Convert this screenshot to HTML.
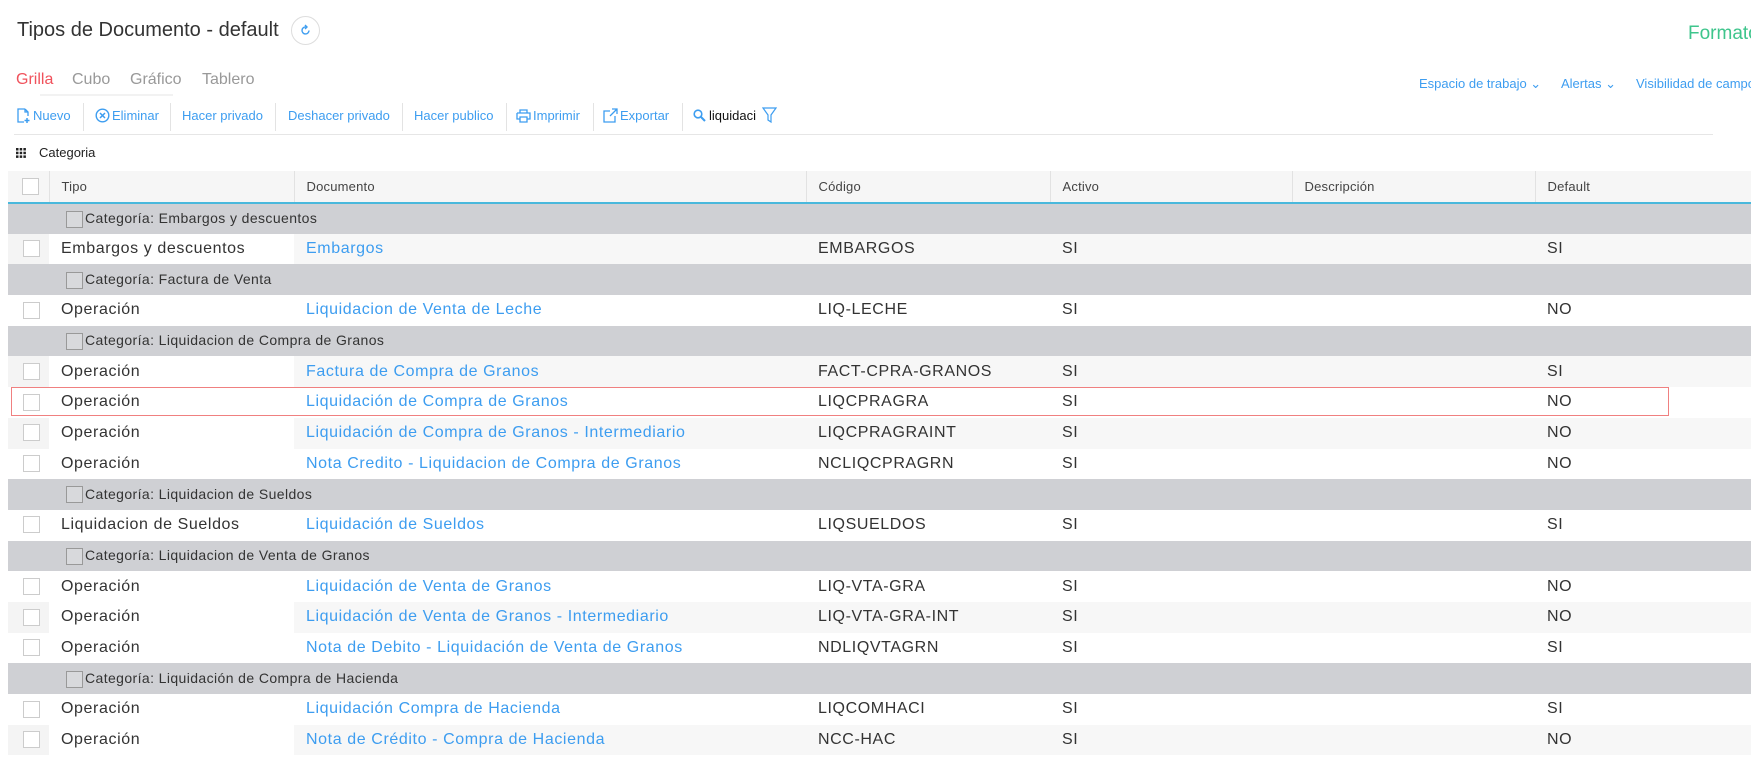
<!DOCTYPE html>
<html><head><meta charset="utf-8">
<style>
*{box-sizing:border-box;margin:0;padding:0}
body{width:1751px;height:761px;overflow:hidden;background:#fff;font-family:"Liberation Sans",Arial,sans-serif;position:relative;color:#333}
.a{position:absolute;white-space:nowrap}
.blue{color:#3d9df0}
.tb{position:absolute;top:107px;font-size:13px;color:#3d9df0;line-height:18px}
.sep{position:absolute;top:103px;width:1px;height:28px;background:#e3e3e3}
table{position:absolute;left:8px;top:171px;width:1743px;border-collapse:collapse;table-layout:fixed;font-size:16px;letter-spacing:0.6px}
td,th{height:30.7px;padding:0;white-space:nowrap;overflow:hidden;text-align:left;font-weight:normal}
th{height:32px;background:#f6f6f6;font-size:13px;letter-spacing:0.2px;color:#444;border-bottom:2px solid #49b8dc;border-left:1px solid #e2e2e2}
th:first-child{border-left:none}
th .t,td .t{padding-left:12px}
.cb{display:inline-block;width:17px;height:17px;border:1px solid #ccc;background:#fff;vertical-align:middle;margin-left:15px}
.g td{background:#cfd0d4;font-size:14px;letter-spacing:0.4px;color:#333}
.g .t{padding-left:17px!important}
.g .cb{margin-left:0;margin-right:2px;border-color:#999;background:#d8d9dc}
.s td{background:#f7f7f7}
.s td.w{background:#fff}
.s td:first-child{background:#f4f4f4}
td.l{color:#3d9df0}
</style></head><body>
<div class="a" style="left:17px;top:19px;font-size:20px;color:#333">Tipos de Documento - default</div>
<div class="a" style="left:291px;top:16px;width:29px;height:29px;border:1px solid #ddd;border-radius:50%;"></div>
<svg class="a" style="left:299px;top:24px" width="13" height="13" viewBox="0 0 13 13"><path d="M10 6.5A3.5 3.5 0 1 1 7 3" fill="none" stroke="#3d9df0" stroke-width="1.4"/><path d="M6 1l2 2-2 2" fill="none" stroke="#3d9df0" stroke-width="1.4"/></svg>
<div class="a" style="left:1688px;top:23px;font-size:19px;color:#3ec58c">Formato</div>

<div class="a" style="left:16px;top:71px;font-size:16px;color:#f0525c">Grilla</div>
<div class="a" style="left:72px;top:71px;font-size:16px;color:#999">Cubo</div>
<div class="a" style="left:130px;top:71px;font-size:16px;color:#999">Gráfico</div>
<div class="a" style="left:202px;top:71px;font-size:16px;color:#999">Tablero</div>
<div class="a" style="left:40px;top:94px;width:133px;height:2px;background:#f2f2f2"></div>

<div class="a blue" style="left:1419px;top:76px;font-size:13px">Espacio de trabajo &#8964;</div>
<div class="a blue" style="left:1561px;top:76px;font-size:13px">Alertas &#8964;</div>
<div class="a blue" style="left:1636px;top:76px;font-size:13px">Visibilidad de campos</div>

<svg class="a" style="left:16px;top:108px" width="15" height="16" viewBox="0 0 15 16"><path d="M9 1H2v13h6M9 1l3 3v4M9 1v3h3" fill="none" stroke="#3d9df0" stroke-width="1.3"/><path d="M11 10v5M8.5 12.5h5" stroke="#3d9df0" stroke-width="1.5"/></svg>
<div class="tb" style="left:33px">Nuevo</div>
<div class="sep" style="left:83px"></div>
<svg class="a" style="left:95px;top:108px" width="15" height="15" viewBox="0 0 15 15"><circle cx="7.5" cy="7.5" r="6.3" fill="none" stroke="#3d9df0" stroke-width="1.4"/><path d="M5 5l5 5M10 5l-5 5" stroke="#3d9df0" stroke-width="1.5"/></svg>
<div class="tb" style="left:112px">Eliminar</div>
<div class="sep" style="left:170px"></div>
<div class="tb" style="left:182px">Hacer privado</div>
<div class="sep" style="left:275px"></div>
<div class="tb" style="left:288px">Deshacer privado</div>
<div class="sep" style="left:402px"></div>
<div class="tb" style="left:414px">Hacer publico</div>
<div class="sep" style="left:506px"></div>
<svg class="a" style="left:516px;top:109px" width="15" height="14" viewBox="0 0 15 14"><path d="M4 4V1h7v3M1 4h13v6h-3M4 10H1V4M4 8h7v5H4z" fill="none" stroke="#3d9df0" stroke-width="1.3"/></svg>
<div class="tb" style="left:533px">Imprimir</div>
<div class="sep" style="left:593px"></div>
<svg class="a" style="left:603px;top:108px" width="15" height="15" viewBox="0 0 15 15"><path d="M7 3H1v11h11V8M9 1h5v5M14 1L7 8" fill="none" stroke="#3d9df0" stroke-width="1.3"/></svg>
<div class="tb" style="left:620px">Exportar</div>
<div class="sep" style="left:682px"></div>
<svg class="a" style="left:693px;top:109px" width="13" height="13" viewBox="0 0 13 13"><circle cx="5" cy="5" r="3.8" fill="none" stroke="#3d9df0" stroke-width="1.6"/><path d="M8 8l4 4" stroke="#3d9df0" stroke-width="2"/></svg>
<div class="tb" style="left:709px;color:#111;width:47px;overflow:hidden">liquidaci</div>
<svg class="a" style="left:762px;top:107px" width="15" height="17" viewBox="0 0 15 17"><path d="M1 1h13L9 8v7l-3-2V8z" fill="none" stroke="#3d9df0" stroke-width="1.2"/></svg>
<div class="a" style="left:14px;top:134px;width:1699px;height:1px;background:#e6e6e6"></div>

<svg class="a" style="left:16px;top:148px" width="10" height="10" viewBox="0 0 10 10" fill="#222"><rect x="0" y="0" width="2.5" height="2.5"/><rect x="3.7" y="0" width="2.5" height="2.5"/><rect x="7.4" y="0" width="2.5" height="2.5"/><rect x="0" y="3.7" width="2.5" height="2.5"/><rect x="3.7" y="3.7" width="2.5" height="2.5"/><rect x="7.4" y="3.7" width="2.5" height="2.5"/><rect x="0" y="7.4" width="2.5" height="2.5"/><rect x="3.7" y="7.4" width="2.5" height="2.5"/><rect x="7.4" y="7.4" width="2.5" height="2.5"/></svg>
<div class="a" style="left:39px;top:145px;font-size:13px;color:#222">Categoria</div>

<table>
<colgroup><col style="width:41px"><col style="width:245px"><col style="width:512px"><col style="width:244px"><col style="width:242px"><col style="width:243px"><col></colgroup>
<tr><th><span class="cb" style="margin-left:14px"></span></th><th><span class="t">Tipo</span></th><th><span class="t">Documento</span></th><th><span class="t">Código</span></th><th><span class="t">Activo</span></th><th><span class="t">Descripción</span></th><th><span class="t">Default</span></th></tr>
<tr class="g"><td></td><td colspan="6"><span class="t"><span class="cb"></span>Categoría: Embargos y descuentos</span></td></tr>
<tr class="s"><td><span class="cb"></span></td><td class="w"><span class="t">Embargos y descuentos</span></td><td class="l"><span class="t">Embargos</span></td><td><span class="t">EMBARGOS</span></td><td><span class="t">SI</span></td><td></td><td><span class="t">SI</span></td></tr>
<tr class="g"><td></td><td colspan="6"><span class="t"><span class="cb"></span>Categoría: Factura de Venta</span></td></tr>
<tr><td><span class="cb"></span></td><td><span class="t">Operación</span></td><td class="l"><span class="t">Liquidacion de Venta de Leche</span></td><td><span class="t">LIQ-LECHE</span></td><td><span class="t">SI</span></td><td></td><td><span class="t">NO</span></td></tr>
<tr class="g"><td></td><td colspan="6"><span class="t"><span class="cb"></span>Categoría: Liquidacion de Compra de Granos</span></td></tr>
<tr class="s"><td><span class="cb"></span></td><td class="w"><span class="t">Operación</span></td><td class="l"><span class="t">Factura de Compra de Granos</span></td><td><span class="t">FACT-CPRA-GRANOS</span></td><td><span class="t">SI</span></td><td></td><td><span class="t">SI</span></td></tr>
<tr><td><span class="cb"></span></td><td><span class="t">Operación</span></td><td class="l"><span class="t">Liquidación de Compra de Granos</span></td><td><span class="t">LIQCPRAGRA</span></td><td><span class="t">SI</span></td><td></td><td><span class="t">NO</span></td></tr>
<tr class="s"><td><span class="cb"></span></td><td class="w"><span class="t">Operación</span></td><td class="l"><span class="t">Liquidación de Compra de Granos - Intermediario</span></td><td><span class="t">LIQCPRAGRAINT</span></td><td><span class="t">SI</span></td><td></td><td><span class="t">NO</span></td></tr>
<tr><td><span class="cb"></span></td><td><span class="t">Operación</span></td><td class="l"><span class="t">Nota Credito - Liquidacion de Compra de Granos</span></td><td><span class="t">NCLIQCPRAGRN</span></td><td><span class="t">SI</span></td><td></td><td><span class="t">NO</span></td></tr>
<tr class="g"><td></td><td colspan="6"><span class="t"><span class="cb"></span>Categoría: Liquidacion de Sueldos</span></td></tr>
<tr><td><span class="cb"></span></td><td><span class="t">Liquidacion de Sueldos</span></td><td class="l"><span class="t">Liquidación de Sueldos</span></td><td><span class="t">LIQSUELDOS</span></td><td><span class="t">SI</span></td><td></td><td><span class="t">SI</span></td></tr>
<tr class="g"><td></td><td colspan="6"><span class="t"><span class="cb"></span>Categoría: Liquidacion de Venta de Granos</span></td></tr>
<tr><td><span class="cb"></span></td><td><span class="t">Operación</span></td><td class="l"><span class="t">Liquidación de Venta de Granos</span></td><td><span class="t">LIQ-VTA-GRA</span></td><td><span class="t">SI</span></td><td></td><td><span class="t">NO</span></td></tr>
<tr class="s"><td><span class="cb"></span></td><td class="w"><span class="t">Operación</span></td><td class="l"><span class="t">Liquidación de Venta de Granos - Intermediario</span></td><td><span class="t">LIQ-VTA-GRA-INT</span></td><td><span class="t">SI</span></td><td></td><td><span class="t">NO</span></td></tr>
<tr><td><span class="cb"></span></td><td><span class="t">Operación</span></td><td class="l"><span class="t">Nota de Debito - Liquidación de Venta de Granos</span></td><td><span class="t">NDLIQVTAGRN</span></td><td><span class="t">SI</span></td><td></td><td><span class="t">SI</span></td></tr>
<tr class="g"><td></td><td colspan="6"><span class="t"><span class="cb"></span>Categoría: Liquidación de Compra de Hacienda</span></td></tr>
<tr><td><span class="cb"></span></td><td><span class="t">Operación</span></td><td class="l"><span class="t">Liquidación Compra de Hacienda</span></td><td><span class="t">LIQCOMHACI</span></td><td><span class="t">SI</span></td><td></td><td><span class="t">SI</span></td></tr>
<tr class="s"><td><span class="cb"></span></td><td class="w"><span class="t">Operación</span></td><td class="l"><span class="t">Nota de Crédito - Compra de Hacienda</span></td><td><span class="t">NCC-HAC</span></td><td><span class="t">SI</span></td><td></td><td><span class="t">NO</span></td></tr>
</table>
<div class="a" style="left:11px;top:387px;width:1658px;height:29px;border:1.5px solid #f08080"></div>
</body></html>
